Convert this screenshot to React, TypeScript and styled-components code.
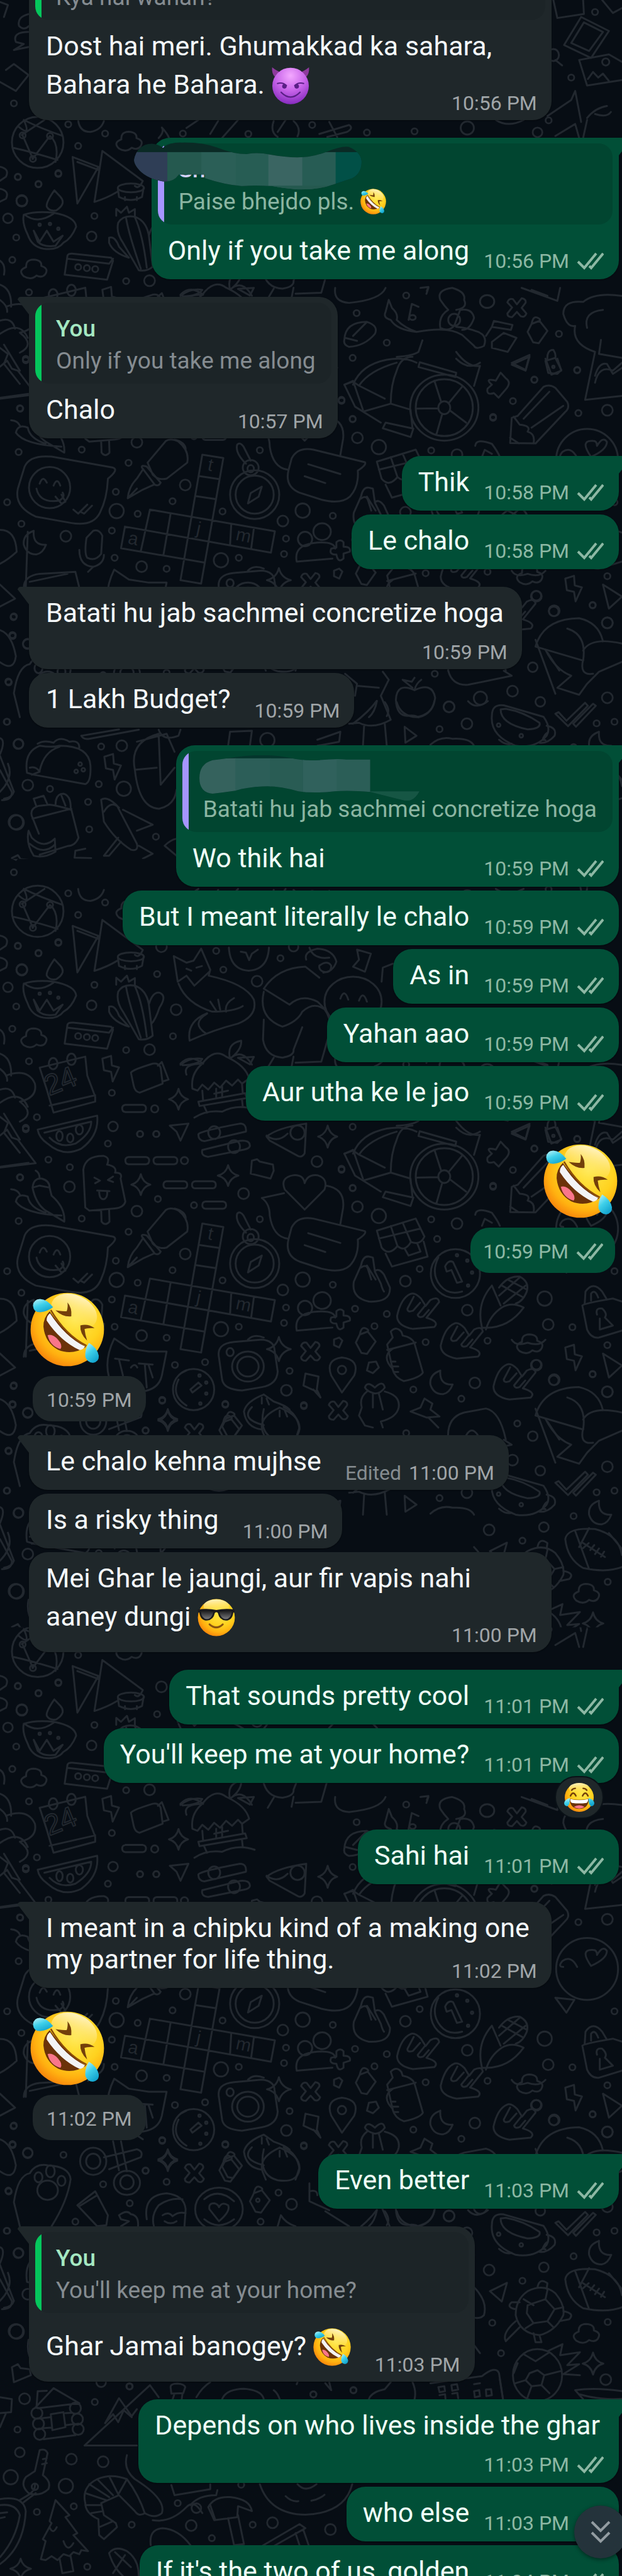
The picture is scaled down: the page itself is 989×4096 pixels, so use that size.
import React from "react";
import styled, { createGlobalStyle, css } from "styled-components";

const GlobalStyle = createGlobalStyle`
  * { box-sizing: border-box; }
  html, body { margin: 0; padding: 0; background: #070d14; }
`;

/* ---------- wallpaper ---------- */

type Dot = [number, number, number];

// A strip of doodles. Each strip is charted on a 1568-wide sheet whose
// vertical axis is three times as fine as the wallpaper's.
const SX = 1037 / 1568;
const SY = 1 / 3;

function Strip({ y, paths, dots }: { y: number; paths: string[]; dots: Dot[] }) {
  return (
    <g>
      <g transform={`translate(0 ${y}) scale(${SX} ${SY})`}>
        <path d={paths.join(" ")} vectorEffect="non-scaling-stroke" />
      </g>
      {dots.map(([cx, cy, r], i) => (
        <circle key={i} cx={cx * SX} cy={y + cy * SY} r={r} />
      ))}
    </g>
  );
}

const oval = (x: number, y: number, rx: number, ry: number) =>
  `M${x - rx} ${y} a${rx} ${ry} 0 1 0 ${rx * 2} 0 a${rx} ${ry} 0 1 0 ${-rx * 2} 0`;
const spark = (x: number, y: number, w: number, h: number) =>
  `M${x} ${y - h} Q${x + w / 5} ${y - h / 5} ${x + w} ${y} Q${x + w / 5} ${y + h / 5} ${x} ${y + h} Q${x - w / 5} ${y + h / 5} ${x - w} ${y} Q${x - w / 5} ${y - h / 5} ${x} ${y - h}`;
const cloud = (x: number, y: number) =>
  `M${x - 25} ${y + 38} q-16 -30 6 -46 q-2 -36 18 -38 q22 2 20 32 q20 12 10 42 q-8 20 -22 6 q-14 26 -32 4`;
const cross = (x: number, y: number) =>
  `M${x} ${y - 18} l12 -30 q12 4 10 22 l-10 26 l12 28 q-4 22 -14 14 l-10 -22 l-12 26 q-12 0 -12 -18 l12 -30 l-12 -26 q4 -22 14 -16 Z`;
const pill = (x: number, y: number) =>
  `M${x + 8} ${y} h44 q8 2 8 18 q0 16 -8 18 h-44 q-8 -2 -8 -18 q0 -16 8 -18`;
const bolt = (x: number, y: number) =>
  `M${x - 20} ${y - 50} l22 -14 l2 48 l18 10 l-16 70 l-4 -48 l-18 -8 Z`;
const moon = (x: number, y: number) =>
  `M${x} ${y - 60} q-28 20 -25 70 q8 50 32 48 q16 -6 24 -48 q-34 4 -31 -70`;
const tag = (x: number, y: number) =>
  `M${x - 20} ${y - 5} l10 -40 l20 -15 l20 50 l-22 62 l-14 -5 Z M${x - 10} ${y - 45} q4 -40 14 -32 q10 8 6 17`;
const hand = (x: number, y: number) =>
  `M${x} ${y} q-24 20 -34 110 q0 50 40 65 l54 -10 q14 -26 -20 -46 l32 -79 q-2 -30 -22 -10 l-12 30 l-12 -38 q-16 -32 -26 -22 M${x + 8} ${y + 14} l-16 60 q0 20 14 10 l18 -40 M${x + 36} ${y + 60} l-18 44 q2 18 14 8 l14 -32`;

const strip1 = [
  "M0 10 L20 25 L10 85 M1395 0 L1405 90 L1472 70 L1470 0 M1465 85 L1535 155 L1490 290 L1422 225 Z M1472 112 L1520 160 L1485 255 L1440 215 Z M1518 0 L1545 65 L1568 40",
  "M1460 300 L1535 272 L1568 310 M1460 300 L1480 428 L1568 400 M1482 395 L1495 360 L1508 388 L1520 368 L1535 405 M1400 300 L1417 327",
  oval(1395, 275, 14, 30),
  "M73 70 Q42 85 48 130 Q60 155 73 130 M73 160 Q30 160 40 210 L60 220 L35 250 L72 235 M0 410 L40 455 L72 375 L35 320 L15 350",
  oval(95, 712, 65, 128),
  "M45 630 Q80 690 60 600 M60 600 Q100 640 158 680 M55 675 L112 600 M35 740 Q80 760 145 800 M82 795 L126 680 M57 677 L83 795 M126 680 Q150 720 140 810",
  "M197 600 Q200 660 228 660 Q255 650 262 605", cloud(325, 705),
  "M400 690 Q415 660 408 638 Q422 668 426 690",
  "M183 785 L248 835 L195 1018 Z M195 810 L248 850 M258 755 L238 1010 Q270 990 295 960 M258 755 L360 905 Q350 950 340 930",
  oval(330, 940, 33, 22), "M297 940 L300 985 Q330 1015 358 985 L362 940 M315 985 v16 M345 985 v16",
  "M500 600 L470 640 M600 600 L560 690 M550 605 L530 670 M690 605 Q680 660 700 685 M740 605 Q760 640 750 682 M720 600 L700 660 M805 670 L880 625 Q892 640 875 660 L825 685 M830 610 L850 685",
  "M1250 600 Q1280 640 1320 600 M1400 680 L1450 620 L1460 690 M1470 690 L1480 600 M1530 530 Q1500 540 1480 590 M1500 570 Q1530 590 1540 560 M1380 580 L1440 500 L1450 455 L1465 610",
];
const dots1: Dot[] = [[1500, 60, 5], [1527, 310, 6], [1440, 388, 5], [35, 517, 5], [1383, 602, 5], [1178, 640, 11], [1045, 657, 5], [925, 663, 5], [787, 625, 5], [626, 670, 5], [461, 668, 5], [172, 622, 5], [265, 668, 5], [197, 730, 5], [1355, 662, 8], [57, 677, 5], [126, 680, 5], [83, 795, 5], [45, 884, 5], [147, 866, 5], [97, 920, 5], [55, 1003, 9]];

const strip4 = [
  "M0 360 Q25 370 15 410 L0 430 M0 470 Q25 480 15 520 L0 535 M0 830 Q15 850 10 900",
  "M137 478 Q115 540 118 560 Q125 585 142 578 Q168 545 152 510 Z M60 600 Q90 580 135 590 Q190 610 192 660 Q180 720 160 740 Q145 780 110 770 Q80 760 70 700 Q55 640 60 600 M62 600 Q95 650 135 595 M85 680 L100 735 L118 680 L135 735 L158 705 L140 755 Q110 765 95 735 Z",
  "M293 605 L293 570 L305 590 L320 560 L325 590 L340 572 L340 610 M298 640 Q310 600 340 610 Q368 630 375 700 L385 860 Q370 885 350 878 L310 740 Q292 690 298 640 M318 618 Q325 700 355 870 M340 612 Q360 700 370 865 M275 715 Q290 705 300 760 L325 815 Q285 790 275 740 Z M376 700 Q385 640 402 645 Q422 660 402 720 Q392 780 382 800",
  "M170 805 Q172 793 185 795 L280 815 L285 830 L270 925 L163 900 Z M170 820 L275 845 L285 820", cloud(85, 870),
  "M0 950 Q30 970 28 1060 M15 1060 Q70 1020 88 1100 Q95 1170 50 1190 Q90 1250 50 1290 M0 1130 Q30 1110 38 1170 M10 1250 L50 1380",
  "M100 1020 L215 965 L220 1060 L240 1165 L240 1190 L135 1245 L118 1130 Z M125 1210 L240 1158", oval(134, 1000, 11, 28), oval(180, 978, 11, 28),
  bolt(278, 1025),
  "M330 1045 Q335 1030 385 1000 Q400 995 405 1020 L410 1100 L352 1145 Q340 1140 337 1110 Z M398 1010 L408 992 L425 1080 L412 1088",
  "M485 1125 Q480 1050 510 1000 Q540 920 570 965 Q620 1010 628 1075 L610 1100 L600 1080 L585 1110 L570 1085 L555 1120 L540 1095 L525 1130 L510 1105 L498 1135 Z M500 1190 L618 1148 L622 1172 L503 1212 Z M510 1135 L512 1185 M610 1100 L612 1148 M545 1125 L545 1172 M560 1115 L560 1165 M540 1150 L575 1135 M455 1000 Q480 950 512 1000 M470 1055 Q460 1000 512 1000 M580 975 Q570 900 608 885 Q610 930 580 975 Q610 920 635 1005 M490 1270 Q520 1230 560 1240 Q600 1200 642 1230 M515 1215 L522 1245 M610 1180 L612 1215",
  "M438 462 L470 495 L488 485 L507 425 L530 530 L526 560 Q620 600 640 680 Q650 760 600 800 Q540 830 478 885 Q470 790 522 748 M438 462 L448 590 L470 560 L490 610 L528 540 M450 600 Q470 700 535 740 Q590 740 612 712 M522 750 Q480 800 520 850 M530 690 L545 735 M550 680 L555 730 M590 672 Q565 700 570 740 M470 525 l12 10 M495 520 l14 -8",
  "M665 625 Q700 520 770 515 L805 570 M665 625 L730 705 Q760 650 800 690 Q830 740 832 800 M665 640 Q650 770 712 815 Q750 790 762 740 Q790 690 815 725 M665 780 L663 880 Q670 965 712 970 Q742 960 740 930 L762 818 M675 1020 L690 970 M735 1015 L740 965 M745 995 L810 990 L830 850 M772 480 Q765 440 800 425 Q840 430 848 490 Q840 540 815 545 M780 420 Q790 480 830 470 M805 510 q20 -30 30 0 q0 40 -20 30 q-12 -10 -10 -30",
  oval(890, 690, 72, 125), "M858 675 Q868 620 878 680 M905 685 Q915 630 925 690",
  "M577 420 Q580 530 627 535 Q675 530 678 420 M607 440 L620 445 L628 482 L635 450 L650 430 M900 430 L935 450 L920 540 L890 515 L905 480 Z M962 590 L965 520 L990 500",
  "M95 1330 L245 1260 Q250 1360 205 1425 Q160 1470 120 1400 Q98 1370 95 1330 M112 1345 L230 1290 Q230 1350 190 1400 Q150 1425 125 1370", oval(150, 1362, 8, 25), oval(177, 1372, 8, 22), oval(200, 1330, 9, 24),
  pill(308, 1206), spark(450, 1178, 24, 52), "M428 1310 L475 1300 L455 1385 L445 1340 Z",
  "M500 1355 Q498 1340 605 1300 Q622 1300 620 1340 L515 1388 Q500 1385 500 1355", oval(540, 1345, 15, 32),
];
const dots4: Dot[] = [[147, 396, 5], [45, 412, 5], [97, 448, 5], [407, 415, 9], [545, 436, 5], [707, 473, 5], [740, 415, 8], [563, 530, 5], [396, 552, 5], [648, 588, 9], [55, 532, 9], [238, 606, 5], [20, 618, 8], [41, 714, 5], [231, 708, 8], [444, 730, 9], [197, 862, 5], [219, 867, 5], [240, 872, 5], [436, 863, 5], [31, 826, 5], [377, 930, 9], [318, 932, 5], [73, 988, 5], [282, 1146, 5], [390, 1226, 6], [93, 1268, 5], [285, 1314, 8], [65, 1328, 5], [353, 1352, 5], [394, 1352, 5], [100, 650, 2], [126, 646, 2], [147, 670, 2]];

const strip5 = [
  "M0 200 L90 178 L45 60 L30 50 L18 10 L0 40",
  "M510 112 L605 66 Q630 60 630 92 Q628 105 615 110 L525 146 Q506 142 510 112", oval(590, 95, 15, 32),
  "M672 45 Q700 0 772 -20 L768 128 Q762 150 752 143 L680 65 Z", oval(750, 25, 18, 36), "M672 40 Q700 80 725 30", spark(826, 45, 24, 55),
  pill(316, 147), pill(387, 147), pill(412, 268), pill(484, 268), pill(510, 370), spark(355, 285, 24, 52), spark(575, 240, 26, 52),
  "M635 165 L648 158 L655 170 L688 185 L690 215 L682 255 L632 230 Z",
  "M215 400 L210 210 Q215 140 262 142 Q278 150 270 185 Q296 195 290 225 Q310 225 304 255 L316 370 Q312 400 290 404 L225 415 Z M255 412 L256 470 Q265 495 276 470 L275 408 M238 250 L252 265 L240 278 M285 245 L272 262 L285 272 M245 315 L276 318 M250 318 Q250 360 262 358 Q272 350 270 318",
  "M82 300 Q85 250 105 255 Q125 265 125 300 L100 290 Z M90 215 Q100 225 100 255 M82 300 Q90 380 115 415 L162 470 Q165 400 130 340 L125 300 M28 308 Q45 310 50 335 M40 370 Q45 325 70 345 Q75 400 115 425 M40 370 Q60 430 155 440",
  oval(1120, 245, 86, 165), oval(1120, 245, 72, 142), oval(1120, 245, 15, 32),
  "M1112 215 L1095 110 M1132 220 L1165 140 M1135 260 L1175 320 M1115 275 L1100 380 M1104 248 L1050 250 M1150 0 Q1180 60 1210 20 M890 130 Q910 30 975 5 Q1020 -10 1050 20 M1000 60 Q985 130 985 225 L915 265 M868 130 L890 115 L905 135 L970 200 M868 130 L895 240 L960 320 M985 225 L1035 255 L1040 350 M1000 60 Q1010 -10 1040 -10 M972 320 L1042 350 L1035 392 L965 348 Z M1058 18 L1150 70 L1148 92 L1055 42 Z M905 135 Q930 60 1000 20",
  "M1262 70 L1275 98 Q1292 120 1272 160 L1257 195 L1245 172 Q1225 185 1229 150 L1240 130 Q1220 95 1250 110 Z M1290 30 L1335 -10 L1325 60 Z M1375 0 L1390 80 L1415 60 L1405 0 M1500 120 Q1510 30 1545 60 L1568 20",
  "M1305 286 L1370 141 Q1385 126 1400 146 L1430 216 Q1437 246 1425 266 L1350 424 L1286 422 L1290 296 Z M1295 290 L1310 330 Q1340 335 1330 365 Q1350 375 1345 424 M1320 300 L1385 165 M1340 345 L1420 236 M1286 395 L1308 424",
  "M768 410 L718 310 Q705 250 740 238 Q765 235 768 278 Q775 232 800 238 Q828 255 818 310 Z M660 352 L716 328 M660 352 Q680 380 680 440 Q688 545 725 555 M822 290 Q870 305 865 400 L858 482",
  "M735 500 Q750 440 790 455 L920 518 Q925 530 902 560 Q905 640 882 690 Q860 730 810 705 L755 670 Q718 640 727 560 Z M777 528 L858 577 M768 588 L820 622",
  "M950 515 L1048 455 L1070 545 Q1060 590 1036 572 Q1020 625 1002 592 Q980 645 962 600 Z M972 630 L988 695 L1078 645 L1068 570 M955 555 L1060 505 M985 492 L1002 592 M1015 475 L1036 572 M1020 605 L1030 640 L1060 620 L1052 580",
  "M62 540 Q75 480 130 490 L285 545 Q300 555 272 600 Q270 700 252 770 Q235 840 180 822 L90 790 Q35 740 45 650 Z", oval(125, 645, 52, 103),
  "M92 650 Q100 725 150 710 Q165 690 158 670 M100 625 Q108 580 118 620 M135 635 Q144 590 152 635 M140 690 L155 725 L165 715 L155 680 M185 755 L197 775 L220 730 M205 768 L212 775 L232 735",
  "M372 520 L418 412 Q430 395 450 415 Q478 460 472 520 L420 600 Q400 610 385 580 Z M358 545 Q355 530 370 540 L405 620 Q400 640 390 630 Z M322 698 Q325 640 345 600 L360 555 M322 698 L360 655 L388 630 M322 698 L345 650 M440 405 Q470 420 468 460",
  "M510 480 L563 497 L507 1125 L455 1108 Z M502 587 L552 602 M495 688 L545 703 M378 755 L693 863 L683 970 L315 840 M378 755 L355 962 M430 776 L412 982 M583 826 L580 932 M640 848 L633 952 M315 840 L305 948 L515 1020",
  oval(642, 680, 62, 122), oval(642, 680, 48, 95), oval(632, 545, 20, 38), oval(632, 550, 8, 18), "M598 430 Q605 415 614 440 L632 510 M598 430 Q592 470 620 525 M660 640 L652 690 L625 724 L632 672 Z",
  "M930 645 Q915 640 910 690 L892 770 Q885 850 930 870 Q985 875 983 800 L968 735 Q955 700 945 718 L940 650 Z M910 700 q14 -20 18 10 l8 50 M925 690 l22 70 M945 720 l15 60 q4 30 8 40",
  oval(1148, 730, 62, 122), "M1122 695 Q1130 660 1142 672 L1165 770 L1152 776 L1138 712 L1126 720 Z M1105 650 Q1085 730 1110 790 Q1130 840 1165 820",
  hand(1035, 832), hand(1145, 980), hand(1278, 1185),
  oval(812, 865, 22, 42), oval(769, 902, 18, 36),
  "M748 1015 Q740 935 790 922 Q842 910 845 950 M748 1015 L838 1000 M848 918 Q858 900 866 918 L866 940 Q885 940 882 965 L866 975 L866 1000 Q855 1020 850 995 L848 980 Q828 980 835 950 L848 945 Z",
  "M1240 790 Q1200 880 1215 1000 Q1280 1010 1320 900 Q1290 870 1265 900 Q1235 940 1225 1010 M1240 790 L1262 890 M1258 800 Q1280 740 1310 745 Q1335 770 1328 820 Q1318 870 1300 880 M1265 790 L1320 850 M1280 760 L1328 810 M1258 840 L1310 750 M1270 880 L1325 790 M1400 650 L1448 660 L1428 725 Z",
  "M1468 890 Q1470 880 1545 855 L1568 870 M1468 890 L1480 1010 Q1490 1055 1510 1050 L1568 1015 M1474 880 L1476 820 Q1495 765 1518 820 L1530 860 M1490 865 L1490 830 Q1500 805 1508 850 M1505 935 Q1500 900 1518 905 Q1532 930 1525 950 L1545 990 L1512 1010 L1512 955",
  "M552 1150 Q545 1080 590 1072 L660 1060 Q690 1065 692 1110 L700 1220 Q698 1285 660 1298 L610 1315 Q565 1310 560 1262 Z M625 1060 Q640 1030 665 1050", oval(625, 1195, 40, 75), oval(625, 1195, 27, 50), oval(580, 1123, 9, 20), spark(703, 1108, 30, 60),
  "M275 1250 Q262 1160 288 1055 L325 1105 L375 1120 L420 1120 L408 1240 Q400 1310 358 1320 M290 1155 L325 1165 M300 1160 L310 1240 M350 1180 L385 1185 M365 1185 L370 1300 M330 1200 q10 -25 16 0 M375 1190 L385 1250",
  oval(488, 1310, 52, 103), "M500 1275 L508 1290 L485 1325 L480 1310 Z M450 1260 Q430 1340 470 1390 M455 1230 L470 1215",
  "M862 1325 L835 1240 Q820 1160 862 1150 Q908 1160 893 1240 Z M770 1230 L803 1245 L798 1320 L765 1290 Z M790 1310 L808 1350 L800 1315",
  "M976 1085 L990 1050 L985 1020 Q1000 990 1012 1022 L1015 1040 Q1040 1050 1045 1080 L1066 1225 Q1060 1250 1018 1268 Q995 1250 990 1210 Z M976 1112 L1048 1075 M985 1170 h12 M988 1195 h16 M992 1222 h12",
  moon(1110, 1275), cloud(1335, 1080), bolt(1445, 1150), "M1520 1130 L1568 1190 L1535 1250 Z M0 1130 L38 1200 L0 1240",
  cross(783, 1120), cross(853, 1415), tag(917, 1080), "M842 1060 L855 1050 L863 1065 L855 1100 L842 1088 Z M930 1175 L948 1170 L955 1200 L940 1228 L925 1215 Z",
  "M665 1335 Q620 1370 615 1420 Q620 1500 660 1510 M665 1335 L690 1370 Q720 1390 730 1410 M705 1400 Q650 1450 662 1520 L670 1560 M705 1400 Q755 1440 755 1500 L745 1560 M660 1350 v30 M672 1355 l6 30 M705 1415 v30 M718 1415 l6 30",
  "M920 1300 Q925 1265 945 1300 Q965 1260 970 1300 Q960 1330 945 1330 Q925 1320 920 1300 M925 1320 Q905 1350 912 1400 L905 1440 L920 1490 L940 1500 M970 1320 Q1010 1340 1005 1400 Q1000 1450 960 1470 L965 1500 M940 1330 L940 1400 M955 1330 L965 1410",
  "M1070 1355 L1090 1380 L1085 1410 L1108 1445 L1075 1450 L1035 1420 L1060 1400 Z M1080 1450 L1105 1500 M1130 1560 Q1125 1450 1170 1425 L1225 1405 Q1260 1420 1275 1560 M1175 1540 q14 -50 30 0",
  "M1350 1440 Q1370 1300 1460 1298 Q1510 1320 1520 1415 M1350 1440 L1470 1510 Q1480 1380 1430 1350 M1470 1460 Q1490 1390 1568 1425 M1380 1470 L1410 1560", tag(580, 1500), spark(423, 1465, 24, 52),
];
const dots5: Dot[] = [[353, 32, 5], [394, 32, 5], [272, 80, 5], [122, 160, 5], [465, 165, 6], [176, 198, 5], [51, 250, 5], [175, 296, 9], [398, 357, 5], [345, 418, 9], [614, 330, 9], [489, 388, 5], [206, 455, 5], [47, 467, 5], [655, 458, 5], [324, 521, 5], [467, 632, 9], [292, 666, 5], [435, 713, 5], [18, 718, 5], [294, 762, 12], [347, 776, 5], [561, 764, 5], [54, 826, 5], [763, 760, 12], [713, 812, 9], [839, 786, 5], [282, 860, 5], [721, 900, 5], [895, 906, 5], [716, 977, 5], [602, 996, 5], [557, 1008, 12], [289, 996, 5], [357, 1040, 9], [420, 1051, 5], [975, 932, 5], [944, 993, 5], [1022, 768, 9], [1058, 707, 5], [1102, 557, 5], [1087, 459, 5], [1152, 480, 9], [955, 442, 12], [901, 396, 9], [889, 303, 5], [861, 211, 5], [1243, 296, 5], [1293, 212, 5], [1347, 106, 5], [1455, 58, 5], [1178, 913, 9], [1373, 855, 12], [1382, 985, 9], [1443, 998, 5], [1549, 718, 5], [1229, 1066, 5], [1073, 1073, 5], [1531, 1088, 5], [1352, 1188, 9], [1197, 1277, 9], [1396, 1264, 8], [1494, 1234, 5], [1531, 1322, 9], [1042, 1310, 5], [1163, 1356, 5], [1304, 1480, 5], [722, 1314, 9], [730, 1217, 5], [862, 1212, 7], [441, 1187, 5], [517, 1173, 5], [409, 1366, 5], [568, 1386, 5], [766, 1393, 5], [367, 1516, 5], [70, 1428, 8], [34, 1293, 5], [32, 1387, 5], [1024, 1528, 5], [799, 170, 9], [1152, 638, 2], [1178, 665, 2], [1190, 725, 2], [1180, 790, 2], [503, 1240, 2], [520, 1275, 2], [520, 1330, 2], [505, 1380, 2]];

const strip3 = [
  "M990 20 Q960 60 990 120 M1350 320 L1400 590 M1375 370 Q1400 470 1440 500 L1405 560 L1460 595 L1480 540 L1510 480 L1568 430 M1470 420 Q1460 500 1495 490 M1130 475 Q1140 550 1180 545 L1290 500 L1270 475",
  "M870 490 L900 540 L895 600 M965 480 L980 520 L960 600 L985 720 Q940 770 905 735 L880 740 M950 625 Q930 680 890 740 M918 745 L915 850 M970 740 L975 850 M900 550 L955 560",
  "M1045 572 Q1000 530 998 620 Q1000 705 1030 700 Q1045 695 1055 708 Q1092 690 1097 610 Q1090 530 1045 572 M1045 572 Q1048 540 1062 520 M1040 560 L1015 520 L1038 530 L1045 510",
  "M1240 700 Q1240 640 1270 648 L1370 705 Q1390 760 1378 800 Q1350 865 1300 850 Q1235 800 1240 700 M1262 668 Q1262 740 1330 768 Q1365 765 1360 735 Q1320 680 1275 665 Z M1378 750 Q1405 760 1398 800 Q1380 840 1360 835 M1380 785 Q1372 795 1368 820 L1375 822 M1258 820 Q1275 850 1290 840",
  "M1400 690 L1408 682 L1428 725 L1475 635 L1482 650 L1432 752 Z M1445 740 L1452 755 L1502 650 L1495 640 Z", moon(1510, 840), "M1020 755 L1050 800 L1022 835 Z M1085 845 Q1110 800 1140 815 Q1185 810 1195 850",
  "M580 780 L575 850 M580 780 L635 775 L630 850 M800 820 L858 780 L855 830 L800 850 M205 800 L300 768 M205 800 Q210 820 225 815 L350 770 M400 770 Q410 830 450 800 L455 770 M340 970 L395 960 M340 970 Q325 830 400 790 L405 1045 L440 960 M340 970 Q350 1160 400 1165 Q440 1150 445 1070 M345 830 L420 790 L440 880",
  "M68 985 Q60 880 100 850 Q130 860 150 850 Q225 850 228 950 Q230 1030 215 1042 L85 995 Z M100 975 Q110 880 150 855 M75 960 Q90 950 100 980 L80 995 M95 840 Q110 820 135 835 Q150 800 175 830 Q200 820 200 860", bolt(283, 955),
  "M0 900 L35 1080 Q30 1110 10 1115 M20 940 Q35 1010 0 1080",
  "M85 1115 L110 1100 L120 1145 M85 1115 L92 1155 M80 1200 Q75 1160 100 1150 L125 1145 Q145 1150 180 1170 L198 1310 Q190 1350 170 1352 L100 1395 M80 1200 L98 1290 M82 1215 L180 1165 M140 1145 Q140 1090 160 1090 Q180 1100 178 1170 M155 1100 L165 1150",
  "M72 1275 Q65 1340 85 1400 Q110 1415 140 1380 L138 1315 Q110 1370 80 1310 Z M75 1340 Q110 1400 138 1345 M190 1375 L188 1410 L230 1412 M190 1375 L215 1365",
  "M255 1120 Q270 1100 295 1150 L345 1340 Q350 1380 330 1370 Q290 1320 262 1230 Z M262 1180 Q280 1120 300 1160 M310 1170 L385 1245 L345 1275 M262 1400 L298 1310 M262 1400 L275 1400 L305 1330 M350 1350 L385 1390 L360 1415 M415 1350 Q430 1320 445 1315 M415 1350 L445 1400",
];
const dots3: Dot[] = [[1352, 100, 8], [1397, 175, 9], [1494, 146, 5], [1531, 235, 9], [1343, 457, 8], [1096, 490, 5], [1292, 577, 9], [1211, 612, 11], [1362, 630, 8], [1531, 610, 9], [1132, 655, 9], [1177, 740, 9], [1108, 767, 5], [1504, 738, 5], [1549, 730, 5], [674, 822, 12], [255, 854, 5], [307, 850, 9], [46, 842, 8], [70, 1047, 9], [126, 1066, 5], [249, 1042, 5], [312, 1065, 12], [222, 1131, 5], [40, 1232, 12], [225, 1268, 5], [393, 1305, 5], [202, 942, 3], [210, 970, 3], [192, 978, 3], [1257, 747, 3], [1314, 800, 3], [35, 203, 5], [32, 297, 5], [22, 533, 5], [18, 730, 5]];

const strip9 = [
  oval(235, 130, 33, 68), oval(235, 130, 18, 38), oval(320, 238, 33, 60), oval(320, 235, 17, 35),
  "M262 110 L345 70 Q362 80 355 110 L275 170 M285 30 L300 175 M305 30 L320 180 M345 0 L360 20", cross(490, 190), tag(573, 180), spark(423, 120, 24, 50),
  "M35 335 Q45 200 75 190 Q90 140 120 150 Q175 155 178 220 Q170 330 130 455 M35 335 L50 455", oval(97, 210, 10, 25), oval(127, 180, 11, 30), oval(155, 228, 10, 25), oval(120, 275, 26, 48),
  "M195 350 L240 280 L272 400 L268 450 L245 455 Z M200 355 L245 300 M300 400 Q320 370 330 395 Q350 400 348 455 M300 400 L305 420 L325 430 L305 455",
  "M370 420 Q360 300 420 290 Q465 300 468 370 L465 455 M388 455 Q380 400 400 350 Q430 310 460 320 M410 400 Q425 380 435 405 Q450 380 468 390 M415 430 Q430 450 445 430", oval(552, 370, 60, 108),
  "M552 430 L528 370 Q525 340 540 340 Q550 345 552 360 Q560 330 575 350 Q582 380 552 430 M515 320 Q550 260 590 330 M515 420 Q550 480 590 420", tag(650, 335), "M700 455 L708 400 Q720 440 745 455 M780 240 L780 330 L830 375 M780 280 Q800 270 800 300",
  "M635 60 Q605 120 665 150 M665 70 Q650 200 700 225 Q750 240 755 170 Q750 90 715 60",
  "M1425 720 Q1430 660 1500 670 Q1560 700 1568 800 M1425 720 Q1430 820 1470 865 Q1530 890 1568 860 M1450 680 L1485 870 M1485 665 L1460 760 M1535 690 L1568 770 M1470 740 L1525 810 M1470 765 l14 -25 M1488 775 l10 -25 M1500 795 l10 -28 M1515 808 l8 -25",
  "M1235 780 L1278 738 L1265 832 Z M1330 780 Q1370 740 1400 790 Q1425 850 1420 900 Q1400 980 1360 1000 Q1310 990 1300 900 Q1300 820 1330 780 M1330 850 L1375 820 L1398 870 L1380 930 L1345 940 L1328 890 Z M1355 760 Q1360 710 1380 740 L1378 768 M1300 870 Q1275 860 1290 835 L1310 835 M1420 880 Q1450 890 1435 920 L1410 930 M1310 960 L1275 1030 Q1265 990 1300 930 M1360 1000 L1365 1035 L1350 1035 L1345 990 M1345 850 L1320 820 M1375 820 L1380 775 M1398 870 L1420 860 M1345 940 L1325 965 M1380 930 L1395 960", cloud(1478, 990),
  spark(1495, 1142, 26, 55), oval(1355, 1200, 62, 130), "M1335 1190 L1355 1175 L1372 1200 L1365 1250 L1340 1255 L1325 1225 Z M1320 1095 L1350 1130 L1385 1085 M1305 1140 L1295 1190 M1372 1200 L1412 1180 M1325 1225 L1300 1240 M1340 1255 L1330 1310 M1365 1250 L1385 1290 M1380 1080 L1418 1045 L1412 1100 L1462 1085 L1430 1150 L1460 1145 L1420 1195 L1462 1200",
  "M1085 1240 L1215 1205 Q1250 1150 1258 1190 L1268 1320 M1195 760 Q1230 830 1220 900 Q1210 920 1195 912 M1195 1050 L1210 1090",
  "M30 1160 L45 1145 L52 1165 L75 1170 L78 1200 L35 1235 Z M0 720 L30 830 Q30 870 5 870 M0 560 Q15 570 0 640 M0 180 Q35 230 40 150 Q30 40 0 20 M970 380 Q985 420 975 450 M820 380 L880 455 M950 375 Q945 430 930 455 M1000 380 Q1010 450 1050 455 Q1090 440 1095 375 M1180 375 Q1200 420 1230 375",
];
const dots9: Dot[] = [[70, 87, 8], [160, 98, 5], [31, 45, 5], [367, 176, 5], [260, 245, 5], [420, 233, 5], [327, 340, 5], [190, 432, 5], [17, 478, 5], [21, 277, 5], [702, 287, 5], [735, 345, 9], [657, 432, 5], [766, 50, 5], [568, 44, 5], [409, 24, 5], [1132, 404, 9], [1233, 674, 9], [1371, 660, 8], [1446, 605, 5], [1317, 728, 5], [1532, 934, 5], [1241, 938, 5], [1263, 1090, 5], [1527, 1222, 9], [47, 588, 8], [42, 982, 12], [327, 1256, 5], [255, 1235, 8], [891, 1274, 5], [790, 1296, 5], [650, 325, 3]];

const strip10 = [
  "M90 160 L135 65 L200 140 L95 165 Z M95 80 L118 78 M95 80 L92 160", oval(93, 190, 14, 28), oval(190, 165, 14, 28), oval(97, 243, 14, 28), oval(195, 220, 14, 28), oval(100, 295, 14, 28), oval(197, 270, 14, 28),
  "M128 195 L160 185 L165 260 L132 275 Z M107 215 L128 210 M107 265 L130 262 M110 320 L190 300 M165 190 L180 188 M165 250 L185 245",
  "M345 352 L213 352 L378 50 L400 110 M265 240 L300 115 L332 205 L345 170 M265 240 L285 195 L298 235 L312 175 L332 210 M430 60 Q430 42 447 42 Q465 45 467 60 L462 90 L432 92 Z M440 92 L435 122 M460 92 L458 120",
  "M495 110 Q510 60 530 35 M560 120 Q570 70 615 68 Q660 75 665 120 M690 75 Q700 90 705 120 M748 45 L750 35 M830 35 L835 75 L820 40 M930 120 Q935 85 970 70 L985 35 M1040 35 Q1050 80 1045 120 M1105 60 L1120 55 L1122 80 L1108 85 Z M1138 50 L1152 45 L1155 72 L1140 78 Z M1108 100 L1122 95 L1123 118 M1140 92 L1153 88 L1155 115 M1195 45 L1210 40 M1195 80 L1208 75 L1210 105 L1197 110 Z M1225 72 L1238 70 L1240 100 L1226 105 Z M1260 20 L1268 120 M1450 75 Q1500 60 1568 80 M1450 75 L1470 120 M1460 95 Q1510 125 1568 118",
  "M100 375 Q115 365 120 390 L108 500 Q130 530 122 570 Q100 610 72 590 Q50 550 65 510 L88 480 L100 375 M108 420 l10 -5 M106 445 l12 -5 M75 595 Q90 570 88 545 M50 625 L75 595 M60 635 L90 590", oval(88, 558, 8, 16),
  "M0 620 Q60 600 65 680 Q60 860 0 945 M0 650 Q40 640 50 700 Q40 820 0 910 M0 690 l18 -4 M0 715 l12 -5",
  "M215 640 Q205 560 245 520 Q280 490 320 520 Q350 600 365 690 Q350 710 340 680 L300 600 L255 640 L262 700 L292 740 L295 760 L262 820 L250 800 L248 720 Q215 690 215 640 M215 590 L268 625 M225 545 L275 610 M245 520 L285 600 M275 505 L298 595 M320 520 L300 590 M215 650 L255 650 M230 690 L260 680 M250 760 L285 730 M320 400 Q310 470 340 520 Q420 620 408 690 Q390 720 365 690",
  "M385 725 Q430 740 470 660 Q490 620 510 690 M480 650 Q500 600 545 600 L548 575 M432 550 L440 600 L530 570 L530 545 M525 660 Q540 605 580 610 Q630 620 635 680 L600 655 L598 710 L540 725 Z M525 660 L530 650 L542 720 M575 715 L590 850 L615 845 L600 700",
  "M655 545 Q680 695 770 698 Q870 690 888 545 M720 605 Q735 635 752 630 M785 628 Q805 620 818 598 M750 545 Q770 590 798 545",
  "M140 625 L175 700 L165 710 L195 790 L185 800 L222 880 L205 875 L200 895 L185 885 L175 905 L160 895 L145 925 L130 905 L115 925 L103 920 L115 830 L108 820 L130 740 L125 730 Z M150 915 L157 990 L185 980 L178 905 M125 760 q8 40 18 0 M160 830 q10 60 25 10",
  spark(52, 968, 26, 50), "M380 850 Q375 770 410 765 Q450 770 480 850 M660 855 L755 745 L770 765 L690 855 M765 775 L778 850 M745 790 L755 850 M275 890 Q290 850 320 880 Q350 920 350 1005 M275 890 Q285 960 310 1005 M290 885 L330 960 M315 900 L285 990 M0 110 L30 120 L28 185 L0 190 M15 190 L0 260",
];
const dots10: Dot[] = [[62, 118, 9], [239, 134, 5], [326, 56, 5], [44, 272, 5], [50, 386, 8], [180, 420, 9], [260, 433, 9], [27, 510, 12], [166, 554, 12], [186, 656, 5], [93, 684, 5], [448, 640, 5], [495, 665, 8], [332, 748, 5], [482, 752, 9], [534, 815, 5], [637, 748, 5], [687, 738, 9], [833, 772, 9], [220, 958, 5], [790, 96, 5], [891, 76, 5], [608, 548, 5]];

const strip2 = [
  "M0 230 Q50 160 70 250 M0 300 L20 330 L10 380 L50 480 M0 550 L72 530 M0 60 Q20 90 18 120 M455 40 Q480 0 510 10 Q500 40 460 42 M600 5 L640 0 L630 38 Z M845 0 Q840 70 880 75 Q960 60 972 0 M1060 0 l20 -5 l-4 20 M1315 0 L1405 65 L1412 0 M1340 10 L1380 40",
  "M1110 60 Q1100 10 1140 0 Q1175 20 1170 60 Q1180 100 1150 110 M1110 60 Q1120 90 1130 110 Q1105 140 1110 200 Q1130 220 1145 190 L1160 110 Q1190 100 1195 150 Q1185 210 1165 210 M1150 195 Q1180 200 1205 220 Q1230 240 1220 290 Q1200 310 1195 290 L1165 235 Q1130 190 1050 220 Q1000 210 985 160 Q965 150 972 120 L980 60 L988 100 Q1005 130 1000 160 Q1020 200 1050 220 M1065 262 L1055 320 Q1040 340 1000 345 M1150 320 Q1180 400 1210 390 L1195 490 M1240 270 L1270 225 L1302 250 L1280 320 L1240 300 Z M1245 165 L1292 185 L1288 210 L1240 195 Z M1240 195 L1225 240", oval(1145, 160, 15, 30),
  "M1030 160 L1038 80 L1055 95 M1075 30 l5 -30", oval(1040, 148, 8, 12),
  "M868 260 Q870 170 925 170 Q955 190 945 230 Q920 290 880 295 Q865 285 868 260 M890 240 L925 170 M870 250 L900 265 M868 485 L890 465 L915 610", oval(1228, 68, 18, 32), cross(1303, 100), tag(1350, 225),
  "M1420 130 Q1420 60 1470 70 Q1500 20 1568 40 M1420 130 Q1430 200 1450 190 Q1440 280 1500 320 L1475 560 L1568 540 M1480 200 Q1470 120 1520 110 M1515 260 L1510 330 M1500 440 Q1510 370 1530 380 L1545 430 L1568 400 M1510 330 L1568 350 M1290 375 L1335 335 L1325 410 Z M1375 365 L1400 350 L1415 410 L1405 430 L1382 425 Z M1380 360 Q1378 310 1395 310 Q1402 330 1400 350",
  "M1198 790 Q1200 750 1240 780 Q1255 820 1260 845 M1215 845 L1222 810 L1240 830", oval(1480, 860, 78, 155), "M1455 850 Q1440 790 1418 820 Q1405 850 1420 850 M1490 845 Q1460 760 1495 765 Q1505 765 1505 790 Q1520 740 1530 770 Q1530 810 1490 845",
  "M1290 1415 Q1300 1450 1330 1430 Q1360 1450 1375 1415 M0 1210 Q40 1210 42 1320 Q20 1360 0 1380 M60 1500 Q60 1440 100 1430 L190 1420 L200 1500 M75 1470 L170 1430 M70 1220 L65 1500",
  "M235 1215 Q250 1205 258 1240 L255 1330 Q240 1370 220 1350 Q212 1330 218 1250 Z M200 1310 Q200 1390 235 1395 Q262 1380 262 1335 M235 1395 L222 1420", moon(85, 1275),
];
const dots2: Dot[] = [[1024, 38, 5], [899, 126, 5], [975, 274, 5], [1409, 230, 5], [889, 350, 5], [1347, 458, 5], [1455, 410, 5], [861, 560, 5], [1458, 626, 5], [1531, 612, 9], [889, 655, 5], [1243, 645, 5], [50, 602, 5], [166, 1242, 9], [65, 355, 5], [1395, 395, 2]];

const panes = [
  { shift: 0, top: 0, height: 1432 },
  { shift: 1282, top: 1432, height: 1281 },
  { shift: 2516, top: 2713, height: 1582 },
];

const WallpaperSvg = styled.svg`
  position: absolute;
  top: 0;
  left: 0;
  width: 100%;
  height: auto;
  fill: none;
  stroke: #22282f;
  stroke-width: 3;
  stroke-linecap: round;
  stroke-linejoin: round;

  text {
    font-family: "Liberation Sans", sans-serif;
    stroke: none;
    fill: #22282f;
  }

  .outlined {
    fill: none;
    stroke: #22282f;
    stroke-width: 2;
  }
`;

function Wallpaper() {
  return (
    <WallpaperSvg viewBox="0 0 1037 4295" aria-hidden="true">
      <defs>
        <g id="doodles">
          <Strip y={0} paths={strip1} dots={dots1} />
          <Strip y={158} paths={strip4} dots={dots4} />
          <Strip y={480} paths={strip2} dots={dots2} />
          <Strip y={598} paths={strip5} dots={dots5} />
          <Strip y={960} paths={strip3} dots={dots3} />
          <Strip y={1044} paths={strip9} dots={dots9} />
          <g>
            <text className="outlined" x="82" y="545" fontSize="48" transform="rotate(-22 82 545)">24</text>
            <text x="345" y="784" fontSize="30" transform="rotate(12 345 784)">t</text>
            <text x="326" y="890" fontSize="30" transform="rotate(12 326 890)">j</text>
            <text x="212" y="906" fontSize="30" transform="rotate(12 212 906)">a</text>
            <text x="392" y="900" fontSize="30" transform="rotate(12 392 900)">m</text>
          </g>
        </g>
        {panes.map((p, i) => (
          <clipPath id={`pane${i}`} key={i}>
            <rect x="0" y={p.top} width="1037" height={p.height} />
          </clipPath>
        ))}
      </defs>
      {panes.map((p, i) => (
        <g clipPath={`url(#pane${i})`} key={i}>
          <use href="#doodles" y={p.shift} />
        </g>
      ))}
      <Strip y={3960} paths={strip10} dots={dots10} />
    </WallpaperSvg>
  );
}

/* ---------- emoji ---------- */

const HiddenSvg = styled.svg`
  position: absolute;
  width: 0;
  height: 0;
`;

const EmojiDefs = () => (
  <HiddenSvg aria-hidden="true">
    <defs>
      <radialGradient id="sun" cx="0.6" cy="0.36" r="0.66">
        <stop offset="0" stopColor="#ffe94e" />
        <stop offset="0.55" stopColor="#ffd21f" />
        <stop offset="0.82" stopColor="#ffb010" />
        <stop offset="1" stopColor="#f98a0c" />
      </radialGradient>
      <linearGradient id="shine" x1="0.4" y1="0" x2="0.6" y2="1">
        <stop offset="0" stopColor="#fff3c4" />
        <stop offset="1" stopColor="#ffe45e" stopOpacity="0" />
      </linearGradient>
      <linearGradient id="tear" x1="0" y1="0" x2="0.6" y2="1">
        <stop offset="0" stopColor="#c3f6fb" />
        <stop offset="0.5" stopColor="#3fd0ea" />
        <stop offset="1" stopColor="#14a5cf" />
      </linearGradient>
      <radialGradient id="violet" cx="0.5" cy="0.22" r="0.8">
        <stop offset="0" stopColor="#f3a8ff" />
        <stop offset="0.5" stopColor="#c966ea" />
        <stop offset="1" stopColor="#8429bd" />
      </radialGradient>
      <linearGradient id="lens" x1="0" y1="0" x2="0" y2="1">
        <stop offset="0" stopColor="#1d1d1f" />
        <stop offset="1" stopColor="#77777a" />
      </linearGradient>
    </defs>
  </HiddenSvg>
);

const EmojiSvg = styled.svg<{ $size: number; $inline?: boolean }>`
  display: block;
  width: ${(p) => p.$size}px;
  height: ${(p) => p.$size}px;
  ${(p) =>
    p.$inline &&
    css`
      display: inline-block;
      margin: 8px 0 4px;
      vertical-align: -21px;
    `}
`;

type EmojiProps = { size: number; inline?: boolean };

const Rofl = ({ size, inline }: EmojiProps) => (
  <EmojiSvg $size={size} $inline={inline} viewBox="381 34 370 370" role="img" aria-label="🤣">
    <circle cx="566" cy="219" r="183" fill="url(#sun)" />
    <ellipse cx="600" cy="130" rx="120" ry="82" transform="rotate(25 600 130)" fill="url(#shine)" />
    <path d="M478 128 Q446 160 447 205 Q455 285 520 320 Q590 350 660 305 Q560 245 478 128Z" fill="#6b3209" />
    <path d="M468 247 Q495 240 520 270 Q545 298 532 316 Q480 302 468 247Z" fill="#f9768a" />
    <path d="M480 138 Q462 150 463 174 Q530 275 628 322 Q648 318 654 303 Q555 255 480 138Z" fill="#f3f3f5" />
    <path d="M484 122 Q555 245 662 300" fill="none" stroke="#8a4b06" strokeWidth="8" />
    <path d="M507 123 Q545 128 563 128 Q570 108 567 84 Q590 110 586 153 Q545 158 507 123Z" fill="#73400b" />
    <path d="M702 212 Q665 210 652 217 Q655 245 665 275 Q628 240 631 199 Q668 188 702 212Z" fill="#73400b" />
    <path d="M495 108 Q465 68 430 67 Q398 68 395 100 Q398 135 432 133 Q470 128 495 108Z" fill="url(#tear)" />
    <path d="M674 286 Q652 320 656 355 Q665 385 694 385 Q725 380 723 350 Q715 310 674 286Z" fill="url(#tear)" />
  </EmojiSvg>
);

const Imp = ({ size, inline }: EmojiProps) => (
  <EmojiSvg $size={size} $inline={inline} viewBox="722 92 184 184" role="img" aria-label="😈">
    <path d="M724 95 Q722 125 736 140 L768 120 Q750 115 724 95Z M904 95 Q906 125 892 140 L860 120 Q878 115 904 95Z" fill="#8e3a9d" />
    <circle cx="814" cy="186" r="89" fill="url(#violet)" />
    <path d="M750 174 Q775 166 794 184 M878 174 Q853 166 834 184" fill="none" stroke="#5a1f86" strokeWidth="6" strokeLinecap="round" />
    <circle cx="784" cy="188" r="11" fill="#5a1f86" />
    <circle cx="844" cy="188" r="11" fill="#5a1f86" />
    <path d="M768 217 Q814 264 860 217" fill="none" stroke="#5a1f86" strokeWidth="7" strokeLinecap="round" />
  </EmojiSvg>
);

const Cool = ({ size, inline }: EmojiProps) => (
  <EmojiSvg $size={size} $inline={inline} viewBox="0 0 100 100" role="img" aria-label="😎">
    <circle cx="50" cy="50" r="49" fill="url(#sun)" />
    <ellipse cx="50" cy="20" rx="34" ry="18" fill="url(#shine)" />
    <path d="M1 29 Q25 25 50 30 Q75 25 99 29 L98 36 L95 37 Q92 58 75 58 Q58 57 54 38 Q50 34 46 38 Q42 57 25 58 Q8 58 5 37 L2 36Z" fill="#1b1b1d" />
    <path d="M9 34 Q25 30 42 36 Q38 54 25 54 Q11 53 9 34Z M91 34 Q75 30 58 36 Q62 54 75 54 Q89 53 91 34Z" fill="url(#lens)" />
    <path d="M32 68 Q50 84 67 68" fill="none" stroke="#8a5410" strokeWidth="5" strokeLinecap="round" />
  </EmojiSvg>
);

const Joy = ({ size, inline }: EmojiProps) => (
  <EmojiSvg $size={size} $inline={inline} viewBox="0 0 100 100" role="img" aria-label="😂">
    <circle cx="50" cy="50" r="48" fill="url(#sun)" />
    <ellipse cx="50" cy="20" rx="34" ry="18" fill="url(#shine)" />
    <path d="M21 45 Q30 27 39 45 M61 45 Q70 27 79 45 M25 26 Q30 20 37 20 M75 26 Q70 20 63 20" fill="none" stroke="#73400b" strokeWidth="5" strokeLinecap="round" />
    <path d="M18 54 Q50 62 82 54 Q80 88 50 88 Q20 88 18 54Z" fill="#6b3209" />
    <path d="M20 55 Q50 63 80 55 Q79 66 74 68 Q50 72 26 68 Q20 66 20 55Z" fill="#fff" />
    <path d="M32 82 Q50 70 68 82 Q50 92 32 82Z" fill="#f9768a" />
    <path d="M19 52 Q0 58 0 70 Q2 80 11 79 Q20 74 19 52Z M81 52 Q100 58 100 70 Q98 80 89 79 Q80 74 81 52Z" fill="url(#tear)" />
  </EmojiSvg>
);

/* ---------- layout ---------- */

const Screen = styled.main`
  position: relative;
  height: 100vh;
  overflow: hidden;
  background: #070d14;
  font-family: Roboto, "Liberation Sans", sans-serif;
`;

const Thread = styled.ol`
  position: relative;
  display: flex;
  flex-direction: column;
  gap: 28px;
  margin: -106px 0 0;
  padding: 0 5px 0 46px;
  list-style: none;
`;

const Group = styled.li<{ $mine?: boolean }>`
  display: flex;
  flex-direction: column;
  align-items: ${(p) => (p.$mine ? "flex-end" : "flex-start")};
  gap: 6px;
`;

const StickerGroup = styled(Group)`
  gap: 15px;
  padding: 9px 2px 0;
  margin-bottom: -6px;
`;

const Bubble = styled.article<{ $mine?: boolean; $tail?: boolean; $wide?: boolean }>`
  position: relative;
  width: ${(p) => (p.$wide ? "84vw" : "auto")};
  border-radius: 30px;
  background: ${(p) => (p.$mine ? "#014f37" : "#1f272a")};
  color: ${(p) => (p.$mine ? "#effff8" : "#f5f9fb")};
  box-shadow: 0 1px 2px rgba(0, 0, 0, 0.4);

  ${(p) =>
    p.$tail &&
    css`
      ${p.$mine ? "border-top-right-radius" : "border-top-left-radius"}: 0;
      &::before {
        content: "";
        position: absolute;
        top: 0;
        ${p.$mine ? "left: 100%" : "right: 100%"};
        width: 18px;
        height: 28px;
        background: inherit;
        border-radius: ${p.$mine ? "0 5px 0 0" : "5px 0 0 0"};
        clip-path: ${p.$mine ? "polygon(0 0, 100% 0, 100% 15%, 0 100%)" : "polygon(0 0, 100% 0, 100% 100%, 0 15%)"};
      }
    `}
`;

const Body = styled.div<{ $mine?: boolean; $layout?: "row" | "stack" | "overlay" }>`
  display: flex;
  justify-content: space-between;
  align-items: flex-end;
  gap: ${(p) => (p.$mine ? 23 : 38)}px;
  padding: ${(p) => (p.$mine ? "16px 24px 11px 26px" : "16px 23px 9px 27px")};

  ${(p) =>
    p.$layout === "stack" &&
    css`
      flex-direction: column;
      align-items: stretch;
      gap: ${p.$mine ? 10 : 8}px;
    `}
  ${(p) =>
    p.$layout === "overlay" &&
    css`
      display: grid;
      grid-template-columns: minmax(0, 1fr);
      & > * {
        grid-area: 1 / 1;
      }
    `}
`;

const Words = styled.p<{ $mine?: boolean; $stack?: boolean }>`
  margin: 0;
  padding: ${(p) => `0 ${p.$stack ? 6 : 0}px ${p.$mine ? 10 : 12}px 0`};
  font-size: 43px;
  line-height: 50px;
  white-space: nowrap;
`;

const MetaLine = styled.footer<{ $mine?: boolean }>`
  display: flex;
  justify-content: flex-end;
  align-items: center;
  gap: 12px;
  font-size: 32px;
  line-height: 36px;
  white-space: nowrap;
  color: ${(p) => (p.$mine ? "#8db8a4" : "#a0a5a8")};
`;

const Edited = styled.span`
  color: #858c90;
`;

const TickSvg = styled.svg`
  width: 43px;
  height: 28px;
  fill: none;
  stroke: currentColor;
  stroke-width: 4;
`;

const TimePill = styled.div<{ $mine?: boolean }>`
  margin: 0 4px;
  padding: ${(p) => (p.$mine ? "20px 19px 16px 20px" : "20px 22px 16px 22px")};
  border-radius: 30px;
  background: ${(p) => (p.$mine ? "#014f37" : "#1f272a")};
`;

const QuoteFrame = styled.div`
  padding: 9px 10px 0;
`;

const QuoteBox = styled.blockquote<{ $mine?: boolean }>`
  position: relative;
  margin: 0;
  padding: 16px 25px 11px 33px;
  border-radius: 22px;
  background:
    linear-gradient(${(p) => (p.$mine ? "#a695ff, #a695ff" : "#05c65c, #05c65c")}) left / 10px 100% no-repeat,
    ${(p) => (p.$mine ? "#014530" : "#1c2427")};
  color: ${(p) => (p.$mine ? "#8bb5a2" : "#858c91")};
  font-size: 37px;
  line-height: 51px;
  white-space: nowrap;
`;

const QuoteName = styled.cite<{ $mine?: boolean }>`
  display: block;
  min-height: 51px;
  font-style: normal;
  font-weight: 500;
  color: ${(p) => (p.$mine ? "#d5d2fb" : "#a5e8c2")};
`;

const QuoteText = styled.div`
  position: relative;
  display: flex;
  align-items: center;
  gap: 10px;
`;

const Smudge = styled.svg<{ $at: "edge" | "inner" }>`
  position: absolute;
  ${(p) => (p.$at === "edge" ? "left: -38px; top: -2px; width: 362px;" : "left: 27px; top: 7px; width: 350px;")}
  height: auto;
`;

const Reacted = styled.div`
  position: relative;
  padding-bottom: 68px;
`;

const Reaction = styled.button`
  position: absolute;
  right: 24px;
  bottom: 11px;
  width: 78px;
  height: 68px;
  display: flex;
  align-items: center;
  justify-content: center;
  padding: 0;
  border: 2px solid #0a1117;
  border-radius: 34px;
  background: #1f272a;
`;

const JumpButton = styled.button`
  position: absolute;
  right: -8px;
  bottom: 28px;
  width: 84px;
  height: 84px;
  display: flex;
  align-items: center;
  justify-content: center;
  padding: 0;
  border: 0;
  border-radius: 50%;
  background: #24333b;
  box-shadow: 0 2px 6px rgba(0, 0, 0, 0.45);
`;

/* ---------- message parts ---------- */

const Ticks = () => (
  <TickSvg viewBox="0 0 43 28" role="img" aria-label="Delivered">
    <path d="M2 15 L12 25 L31 2 M20 22 L23 25 L42 2" />
  </TickSvg>
);

const Meta = ({ time, mine, edited }: { time: string; mine?: boolean; edited?: boolean }) => (
  <MetaLine $mine={mine}>
    {edited && <Edited>Edited</Edited>}
    <time>{time}</time>
    {mine && <Ticks />}
  </MetaLine>
);

type MessageProps = {
  mine?: boolean;
  tail?: boolean;
  edited?: boolean;
  time: string;
  layout?: "row" | "stack" | "overlay";
  quote?: React.ReactNode;
  children: React.ReactNode;
};

const Message = ({ mine, tail, edited, time, layout = "row", quote, children }: MessageProps) => (
  <Bubble $mine={mine} $tail={tail} $wide={layout === "overlay"}>
    {quote && <QuoteFrame>{quote}</QuoteFrame>}
    <Body $mine={mine} $layout={layout}>
      <Words $mine={mine} $stack={layout === "stack"}>{children}</Words>
      <Meta time={time} mine={mine} edited={edited} />
    </Body>
  </Bubble>
);

const Quote = ({ mine, name, cover, children }: { mine?: boolean; name?: string; cover?: React.ReactNode; children: React.ReactNode }) => (
  <QuoteBox $mine={mine}>
    <QuoteName $mine={mine}>{name}</QuoteName>
    {cover}
    <QuoteText>{children}</QuoteText>
  </QuoteBox>
);

const Sticker = ({ mine, time }: { mine?: boolean; time: string }) => (
  <StickerGroup $mine={mine}>
    <Rofl size={118} />
    <TimePill $mine={mine}>
      <Meta time={time} mine={mine} />
    </TimePill>
  </StickerGroup>
);

const EdgeCover = (
  <Smudge $at="edge" viewBox="0 0 1140 240" aria-hidden="true">
    <clipPath id="edgeShape">
      <path d="M0 90 Q15 10 90 8 Q120 10 145 28 Q180 0 240 2 Q340 0 420 28 Q500 60 565 60 Q620 50 680 62 Q780 80 850 75 Q900 72 960 50 Q1040 18 1075 24 Q1138 50 1140 100 Q1138 160 1090 182 Q1050 195 1000 212 Q920 240 820 237 Q740 230 690 220 Q600 215 540 220 Q450 212 355 180 V162 H225 Q200 198 155 198 Q60 185 18 130 Q2 110 0 90Z" />
    </clipPath>
    <g clipPath="url(#edgeShape)">
      <rect width="1140" height="240" fill="#0a2a25" />
      <rect y="50" width="168" height="190" fill="#2f3e56" />
      <rect x="167" y="50" width="171" height="190" fill="#25594f" />
      <rect x="337" y="50" width="174" height="190" fill="#2b5f57" />
      <rect x="510" y="50" width="164" height="190" fill="#275d54" />
      <rect x="673" y="50" width="171" height="190" fill="#3a6562" />
      <rect x="843" y="50" width="168" height="190" fill="#275c54" />
      <rect x="1010" y="50" width="130" height="190" fill="#015047" />
      <rect x="510" y="218" width="500" height="22" fill="#25594f" />
    </g>
  </Smudge>
);

const InnerCover = (
  <Smudge $at="inner" viewBox="0 0 367 76" aria-hidden="true">
    <clipPath id="innerShape">
      <path d="M0 38 Q0 14 22 8 Q45 6 60 3 Q110 -4 150 4 Q175 10 200 8 Q230 5 245 7 L285 7 V60 H367 Q358 77 344 76 Q320 70 285 61 Q250 58 225 60 Q190 64 165 60 Q130 50 105 52 Q80 53 60 59 Q40 62 22 64 Q0 62 0 38Z" />
    </clipPath>
    <g clipPath="url(#innerShape)">
      <rect width="367" height="76" fill="#04352c" />
      <rect y="5" width="61" height="71" fill="#35625d" />
      <rect x="60" y="5" width="59" height="71" fill="#2c5e58" />
      <rect x="118" y="5" width="56" height="71" fill="#295c54" />
      <rect x="173" y="5" width="57" height="71" fill="#30615c" />
      <rect x="229" y="5" width="56" height="71" fill="#2b5e57" />
      <rect x="285" y="5" width="82" height="71" fill="#165644" />
    </g>
  </Smudge>
);

export default function App() {
  return (
    <Screen>
      <GlobalStyle />
      <EmojiDefs />
      <Wallpaper />
      <Thread>
        <Group>
          <Message time="10:56 PM" layout="overlay" quote={<Quote name="You">Kya hai wahan?</Quote>}>
            Dost hai meri. Ghumakkad ka sahara,<br />
            Bahara he Bahara. <Imp size={60} inline />
          </Message>
        </Group>

        <Group $mine>
          <Message
            mine tail time="10:56 PM"
            quote={<Quote mine name="Sh" cover={EdgeCover}>Paise bhejdo pls. <Rofl size={41} /></Quote>}
          >
            Only if you take me along
          </Message>
        </Group>

        <Group>
          <Message tail time="10:57 PM" quote={<Quote name="You">Only if you take me along</Quote>}>Chalo</Message>
        </Group>

        <Group $mine>
          <Message mine tail time="10:58 PM">Thik</Message>
          <Message mine time="10:58 PM">Le chalo</Message>
        </Group>

        <Group>
          <Message tail time="10:59 PM" layout="stack">Batati hu jab sachmei concretize hoga</Message>
          <Message time="10:59 PM">1 Lakh Budget?</Message>
        </Group>

        <Group $mine>
          <Message mine tail time="10:59 PM" quote={<Quote mine cover={InnerCover}>Batati hu jab sachmei concretize hoga</Quote>}>
            Wo thik hai
          </Message>
          <Message mine time="10:59 PM">But I meant literally le chalo</Message>
          <Message mine time="10:59 PM">As in</Message>
          <Message mine time="10:59 PM">Yahan aao</Message>
          <Message mine time="10:59 PM">Aur utha ke le jao</Message>
        </Group>

        <Sticker mine time="10:59 PM" />
        <Sticker time="10:59 PM" />

        <Group>
          <Message tail edited time="11:00 PM">Le chalo kehna mujhse</Message>
          <Message time="11:00 PM">Is a risky thing</Message>
          <Message time="11:00 PM" layout="overlay">
            Mei Ghar le jaungi, aur fir vapis nahi<br />
            aaney dungi <Cool size={60} inline />
          </Message>
        </Group>

        <Group $mine>
          <Message mine tail time="11:01 PM">That sounds pretty cool</Message>
          <Reacted>
            <Message mine time="11:01 PM">You'll keep me at your home?</Message>
            <Reaction type="button" aria-label="1 reaction">
              <Joy size={48} />
            </Reaction>
          </Reacted>
          <Message mine time="11:01 PM">Sahi hai</Message>
        </Group>

        <Group>
          <Message tail time="11:02 PM" layout="overlay">
            I meant in a chipku kind of a making one<br />
            my partner for life thing.
          </Message>
        </Group>

        <Sticker time="11:02 PM" />

        <Group $mine>
          <Message mine tail time="11:03 PM">Even better</Message>
        </Group>

        <Group>
          <Message tail time="11:03 PM" quote={<Quote name="You">You'll keep me at your home?</Quote>}>
            Ghar Jamai banogey? <Rofl size={60} inline />
          </Message>
        </Group>

        <Group $mine>
          <Message mine tail time="11:03 PM" layout="stack">Depends on who lives inside the ghar</Message>
          <Message mine time="11:03 PM">who else</Message>
          <Message mine time="11:04 PM">If it's the two of us, golden</Message>
        </Group>
      </Thread>
      <JumpButton type="button" aria-label="Jump to latest">
        <svg width="34" height="38" viewBox="0 0 34 38" fill="none" stroke="#929ca1" strokeWidth="4">
          <path d="M3 3 L17 17 L31 3 M3 20 L17 34 L31 20" />
        </svg>
      </JumpButton>
    </Screen>
  );
}
